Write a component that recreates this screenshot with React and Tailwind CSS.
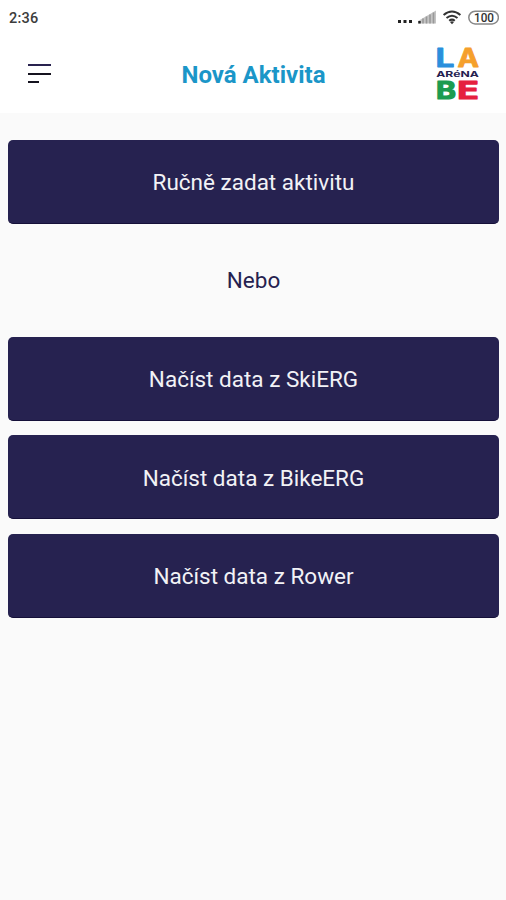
const logoFont = "[font-family:Inter,'Liberation_Sans',sans-serif] font-bold overflow-visible";

function StatusBar() {
  return (
    <div className="flex h-9 items-center justify-between pl-[9px] pr-[7px] text-[#3c3c3c]">
      <span className="pt-[2px] text-[14.5px] font-medium tracking-[0.2px]">2:36</span>
      <svg width="103" height="36" viewBox="396 0 103 36">
        <g fill="#222">
          <rect x="398" y="20" width="3" height="3" />
          <rect x="403.5" y="20" width="3" height="3" />
          <rect x="409" y="20" width="3" height="3" />
        </g>
        <path d="M418 23.5V21L436 10.5V23.5Z" fill="#c4c4c4" />
        <path d="M423 18.5v5M426.5 16.5v7M430 14.5v9M433.5 12.5v11" stroke="#999" strokeWidth="1.6" />
        <rect x="418.3" y="21" width="2.4" height="2.5" fill="#222" />
        <g fill="none" stroke="#333" strokeWidth="2">
          <path d="M443.6 15Q452 8 460.4 15" />
          <path d="M446.5 18Q452 13.5 457.5 18" />
          <path d="M449.2 20.8Q452 18.4 454.8 20.8" />
        </g>
        <path d="M450 22Q452 20.5 454 22L452 24.3Z" fill="#333" />
        <rect x="468.8" y="11.3" width="29.6" height="12.6" rx="6.3" fill="#fff" stroke="#888" strokeWidth="1.5" />
        <text x="474" y="21.7" fontSize="12" fontWeight="500" fill="#333" textLength="20" lengthAdjust="spacingAndGlyphs">100</text>
      </svg>
    </div>
  );
}

function Logo() {
  return (
    <svg width="46" height="56" viewBox="435 46 46 56" className={logoFont}>
      <g fontSize="25" strokeWidth="0.8" strokeLinejoin="round">
        <text x="435.5" y="67.3" fill="#2a8fdc" stroke="#2a8fdc" textLength="19" lengthAdjust="spacingAndGlyphs">L</text>
        <text x="457.5" y="67.3" fill="#f5a02c" stroke="#f5a02c" textLength="21.5" lengthAdjust="spacingAndGlyphs">A</text>
      </g>
      <g fontSize="24.5" strokeWidth="1.2" strokeLinejoin="round">
        <text x="436" y="98.8" fill="#1b9c50" stroke="#1b9c50" textLength="20" lengthAdjust="spacingAndGlyphs">B</text>
        <text x="457.3" y="98.8" fill="#e5203f" stroke="#e5203f" textLength="21.5" lengthAdjust="spacingAndGlyphs">E</text>
      </g>
      <text x="436.3" y="77.2" fontSize="7.5" fill="#25214f" textLength="42.5" lengthAdjust="spacingAndGlyphs">ARéNA</text>
    </svg>
  );
}

function Header() {
  return (
    <header className="grid h-[77px] grid-cols-[1fr_auto_1fr] items-center pl-7 pr-[25px]">
      <button aria-label="Menu" className="mb-[2px] flex w-[23px] flex-col gap-[6.7px]">
        <span className="h-[2px] w-full bg-[#29234f]" />
        <span className="h-[2px] w-full bg-[#15131f]" />
        <span className="h-[2px] w-[11px] bg-[#15131f]" />
      </button>
      <h1 className="pr-[2px] pt-[1px] text-[24px] font-bold text-[#1b96c8]">Nová Aktivita</h1>
      <div className="mb-[1px] justify-self-end"><Logo /></div>
    </header>
  );
}

function Action({ children }) {
  return (
    <button className="h-[84px] w-full rounded-[5px] border-b border-[#151039] bg-[#262250] pl-px pt-[3px] text-[22.5px] text-[#f2f2f6]">
      {children}
    </button>
  );
}

export default function App() {
  return (
    <div className="h-[900px] w-[506px] overflow-hidden bg-[#fafafa] [font-family:Roboto,sans-serif]">
      <div className="bg-white">
        <StatusBar />
        <Header />
      </div>
      <main className="px-[7.5px] pt-[27px]">
        <Action>Ručně zadat aktivitu</Action>
        <p className="flex h-[113px] items-center justify-center pl-px pt-px text-[22.5px] text-[#25214f]">Nebo</p>
        <div className="flex flex-col gap-[14.4px]">
          <Action>Načíst data z SkiERG</Action>
          <Action>Načíst data z BikeERG</Action>
          <Action>Načíst data z Rower</Action>
        </div>
      </main>
    </div>
  );
}
